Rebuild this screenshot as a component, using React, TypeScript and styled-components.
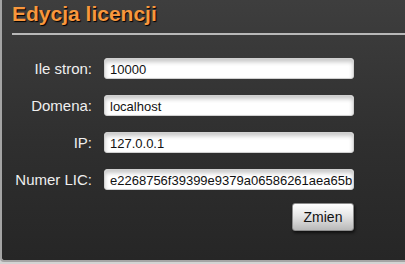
import React from "react";
import styled, { createGlobalStyle } from "styled-components";

const GlobalStyle = createGlobalStyle`
  html, body {
    margin: 0;
    padding: 0;
    background: #d4d4d4;
    overflow: hidden;
  }
  body {
    font-family: "Liberation Sans", Arial, sans-serif;
  }
`;

const fields = [
  { label: "Ile stron:", value: "10000" },
  { label: "Domena:", value: "localhost" },
  { label: "IP:", value: "127.0.0.1" },
  { label: "Numer LIC:", value: "e2268756f39399e9379a06586261aea65b" },
];

export default function App() {
  return (
    <>
      <GlobalStyle />
      <Panel>
        <Title>Edycja licencji</Title>
        <Form onSubmit={(e) => e.preventDefault()}>
          {fields.map((f) => (
            <Row key={f.label}>
              <Label>{f.label}</Label>
              <Input type="text" defaultValue={f.value} />
            </Row>
          ))}
          <Actions>
            <Button type="submit">Zmien</Button>
          </Actions>
        </Form>
      </Panel>
    </>
  );
}

const Panel = styled.div`
  box-sizing: border-box;
  width: 100%;
  height: 262px;
  padding: 0 0 0 10px;
  background: linear-gradient(to bottom, #3e3e3e 0%, #2f2f2f 55%, #262626 100%);
  border-left: 2px solid #a4a4a4;
  border-bottom: 2px solid #a4a4a4;
  border-bottom-left-radius: 4px;
`;

const Title = styled.h1`
  margin: 0;
  padding: 2px 0 0 0;
  height: 35px;
  box-sizing: border-box;
  font-size: 21px;
  font-weight: bold;
  line-height: 24px;
  color: #f8973d;
  text-shadow: 1px 1px 1px #000;
  border-bottom: 2px solid #b8b8b8;
`;

const Form = styled.form`
  display: flex;
  flex-direction: column;
  gap: 16px;
  padding-top: 23px;
`;

const Row = styled.div`
  display: grid;
  grid-template-columns: 80px 250px;
  column-gap: 12px;
  align-items: center;
`;

const Label = styled.label`
  text-align: right;
  font-size: 15px;
  color: #efefef;
`;

const Input = styled.input`
  box-sizing: border-box;
  width: 250px;
  height: 21px;
  margin: 0;
  padding: 1px 1px 0 5px;
  border: 1px solid #d0d0d0;
  border-radius: 3px;
  background: #fff;
  box-shadow: inset 0 3px 4px rgba(0, 0, 0, 0.22);
  font-family: "Liberation Sans", Arial, sans-serif;
  font-size: 13px;
  color: #111;
  outline: none;
`;

const Actions = styled.div`
  display: flex;
  justify-content: flex-end;
  width: 342px;
  margin-top: -3px;
`;

const Button = styled.button`
  width: 62px;
  height: 28px;
  padding: 0;
  border: 1px solid #8c8c8c;
  border-radius: 3px;
  background: linear-gradient(to bottom, #ffffff 0%, #e6e6e6 45%, #b9b9b9 100%);
  box-shadow: 1px 2px 3px rgba(0, 0, 0, 0.6);
  font-family: "Liberation Sans", Arial, sans-serif;
  font-size: 14px;
  color: #111;
  cursor: pointer;
`;
